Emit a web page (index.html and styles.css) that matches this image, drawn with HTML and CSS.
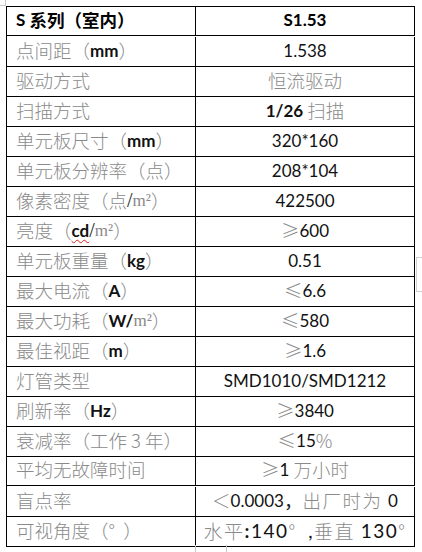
FILE: index.html
```html
<!DOCTYPE html>
<html lang="zh-CN">
<head>
<meta charset="utf-8">
<title>S 系列（室内）</title>
<link rel="stylesheet" href="styles.css">
</head>
<body>
<div class="page">
  <div class="corner"></div>
  <div class="spec">
    <div class="cell lab r1"><span class="bk">S </span><span class="hd">系列（室内）</span></div>
    <div class="cell val r1"><span class="bk">S1.53</span></div>

    <div class="cell lab"><span class="g">点间距（</span><span class="la">mm</span><span class="g">）</span></div>
    <div class="cell val"><span class="l">1.538</span></div>

    <div class="cell lab"><span class="g">驱动方式</span></div>
    <div class="cell val"><span class="g">恒流驱动</span></div>

    <div class="cell lab"><span class="g">扫描方式</span></div>
    <div class="cell val"><span class="la">1/26 </span><span class="g">扫描</span></div>

    <div class="cell lab"><span class="g">单元板尺寸（</span><span class="la">mm</span><span class="g">）</span></div>
    <div class="cell val"><span class="l">320*160</span></div>

    <div class="cell lab"><span class="g">单元板分辨率（点）</span></div>
    <div class="cell val"><span class="l">208*104</span></div>

    <div class="cell lab"><span class="g">像素密度（点</span><span class="sl">/</span><span class="sm">m²</span><span class="g">）</span></div>
    <div class="cell val"><span class="l">422500</span></div>

    <div class="cell lab"><span class="g">亮度（</span><span class="la wavy">cd</span><span class="sl">/</span><span class="sm">m²</span><span class="g">）</span></div>
    <div class="cell val"><span class="g">≥</span><span class="l">600</span></div>

    <div class="cell lab"><span class="g">单元板重量（</span><span class="la">kg</span><span class="g">）</span></div>
    <div class="cell val"><span class="l">0.51</span></div>

    <div class="cell lab"><span class="g">最大电流（</span><span class="la">A</span><span class="g">）</span></div>
    <div class="cell val"><span class="g">≤</span><span class="l">6.6</span></div>

    <div class="cell lab"><span class="g">最大功耗（</span><span class="la">W/</span><span class="sm">m²</span><span class="g">）</span></div>
    <div class="cell val"><span class="g">≤</span><span class="l">580</span></div>

    <div class="cell lab"><span class="g">最佳视距（</span><span class="la">m</span><span class="g">）</span></div>
    <div class="cell val"><span class="g">≥</span><span class="l">1.6</span></div>

    <div class="cell lab"><span class="g">灯管类型</span></div>
    <div class="cell val"><span class="l">SMD1010/SMD1212</span></div>

    <div class="cell lab"><span class="g">刷新率（</span><span class="la">Hz</span><span class="g">）</span></div>
    <div class="cell val"><span class="g">≥</span><span class="l">3840</span></div>

    <div class="cell lab"><span class="g">衰减率（工作 3 年）</span></div>
    <div class="cell val"><span class="g">≤</span><span class="l">15</span><span class="g">%</span></div>

    <div class="cell lab r16"><span class="g">平均无故障时间</span></div>
    <div class="cell val r16"><span class="g">≥</span><span class="l">1 </span><span class="g">万小时</span></div>

    <div class="cell lab"><span class="g">盲点率</span></div>
    <div class="cell val"><span class="g">＜</span><span class="l">0.0003</span><span class="dk">，</span><span class="g sp">出厂时为 </span><span class="l">0</span></div>

    <div class="cell lab"><span class="g">可视角度（°  ）</span></div>
    <div class="cell val wide"><span class="g">水平</span><span class="la">:</span><span class="l">140</span><span class="g">°  </span><span class="l">,</span><span class="g">垂直 </span><span class="l">130</span><span class="g">°</span></div>
  </div>
  <div class="mark-right"></div>
  <div class="mark-bottom"></div>
</div>
</body>
</html>
```
FILE: styles.css
```css
html, body {
  margin: 0;
  padding: 0;
  background: #ffffff;
}

.page {
  position: relative;
  width: 422px;
  height: 552px;
  overflow: hidden;
  padding: 6px 0 0 6px;
  box-sizing: border-box;
}

.corner {
  position: absolute;
  left: 0;
  top: 0;
  width: 5px;
  height: 5px;
  border-right: 1px solid #c8c8c8;
  border-bottom: 1px solid #c8c8c8;
}

.spec {
  display: grid;
  grid-template-columns: 189px 219px;
  grid-auto-rows: 30px;
  width: 408px;
  border-left: 1px solid #000;
  border-top: 1px solid #000;
}

.cell {
  border-right: 1px solid #000;
  border-bottom: 1px solid #000;
  display: flex;
  align-items: center;
  padding-bottom: 3px;
  box-sizing: border-box;
  white-space: nowrap;
  font-size: 18px;
  line-height: 1;
}

.r1 { height: 29px; }
.r16 { height: 29px; }

.lab {
  padding-left: 9px;
}

.val {
  justify-content: center;
}

.wide {
  letter-spacing: 1.5px;
}

.wide .g,
.wide .l,
.wide .la {
  font-size: 19px;
}

.g {
  font-family: "Noto Sans CJK SC", sans-serif;
  font-weight: 300;
  color: #8a8a8a;
  font-size: 18.5px;
  white-space: pre;
}

.sp {
  letter-spacing: 1.5px;
}

.hd {
  font-family: "Noto Sans CJK SC", sans-serif;
  font-weight: 700;
  color: #000;
  font-size: 17.5px;
}

.bk {
  font-family: "Lato", "Noto Sans CJK SC", sans-serif;
  font-weight: 700;
  color: #000;
  font-size: 17px;
  white-space: pre;
}

.l {
  font-family: "Lato", "Noto Sans CJK SC", sans-serif;
  font-weight: 400;
  color: #111;
  font-size: 17px;
  white-space: pre;
}

.la {
  font-family: "Lato", "Noto Sans CJK SC", sans-serif;
  font-weight: 700;
  color: #111;
  font-size: 17px;
  white-space: pre;
}

.dk {
  font-family: "Noto Sans CJK SC", sans-serif;
  color: #222;
  font-size: 18.5px;
}

.sl {
  font-family: "Liberation Serif", serif;
  color: #222;
  font-size: 20px;
}

.sm {
  font-family: "Liberation Serif", serif;
  color: #888;
  font-size: 17px;
}

.wavy {
  text-decoration: underline wavy #e02020;
  text-decoration-thickness: 1px;
  text-underline-offset: 2px;
}

.mark-right {
  position: absolute;
  left: 416px;
  top: 257px;
  width: 10px;
  height: 33px;
  border-left: 1px solid #d0d0d0;
  border-top: 1px solid #d0d0d0;
  border-bottom: 1px solid #d0d0d0;
}

.mark-bottom {
  position: absolute;
  left: 195px;
  top: 545px;
  width: 30px;
  height: 10px;
  border-left: 1px solid #c8c8c8;
  border-right: 1px solid #c8c8c8;
}
```
